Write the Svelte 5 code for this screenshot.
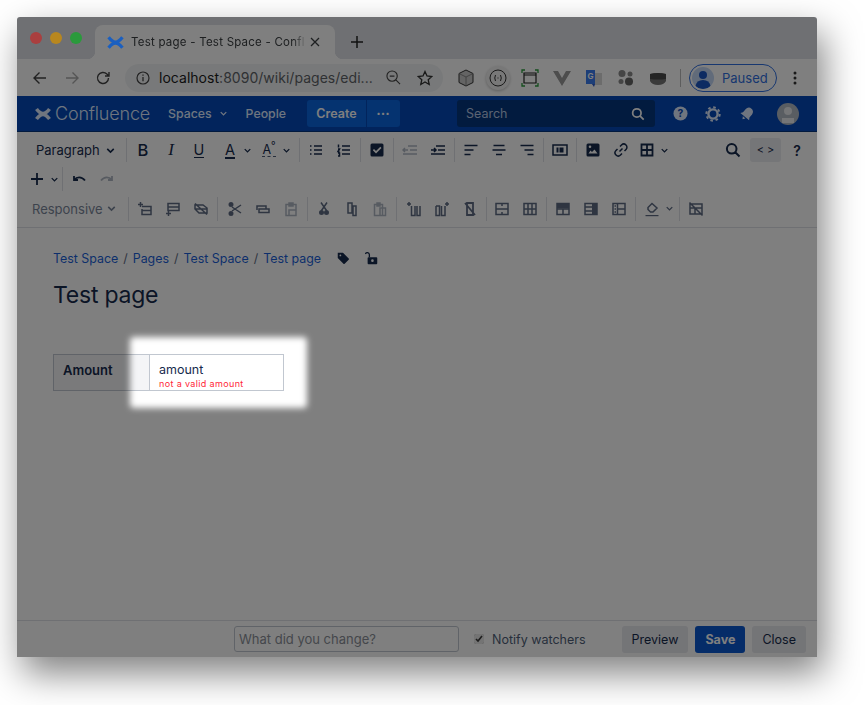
<script>
	const icons = {
		chev: { s: 'M4 6 8 10l4-4', w: 2 },
		bullets: { s: 'M6 4h8M6 8h8M6 12h8M2 4h1.5M2 8h1.5M2 12h1.5' },
		numbers: { s: 'M6 4h8M6 8h8M6 12h8M2.5 2.5v3M2 7h1.5L2 9.5h1.5M2 11h1.5v3H2' },
		check: { f: 'M3 1.5h10A1.5 1.5 0 0 1 14.5 3v10a1.5 1.5 0 0 1-1.5 1.5H3A1.5 1.5 0 0 1 1.5 13V3A1.5 1.5 0 0 1 3 1.5Zm8.3 3.2L7 9 5 7 3.8 8.2 7 11.4l5.5-5.5Z' },
		outdent: { s: 'M6 4h9M8 8h7M1 12h14M6 8H1M3 6 1 8l2 2' },
		indent: { s: 'M6 4h9M8 8h7M1 12h14M1 8h5M4 6l2 2-2 2' },
		left: { s: 'M1.5 3.5h13M1.5 8h9M1.5 12.5h6' },
		center: { s: 'M2.5 3.5h11M1.5 8h13M5 12.5h6' },
		right: { s: 'M1.5 3.5h13M5.5 8h9M8.5 12.5h6' },
		layout: { s: 'M1 3h14v10H1Z', f: 'M4.5 5.5h2v5h-2ZM7.5 5.5h4v5h-4Z' },
		image: { f: 'M3 1.5h10A1.5 1.5 0 0 1 14.5 3v10a1.5 1.5 0 0 1-1.5 1.5H3A1.5 1.5 0 0 1 1.5 13V3A1.5 1.5 0 0 1 3 1.5Zm.5 10h9L9.5 7.5 7 10 5.5 8.5Zm1.5-8a1.3 1.3 0 1 0 0 2.6 1.3 1.3 0 0 0 0-2.6Z' },
		link: { s: 'M6.5 9.5 9.5 6.5M7 4.5l1.5-1.5a3 3 0 0 1 4.5 4.5L11.5 9M9 11.5 7.5 13A3 3 0 0 1 3 8.5L4.5 7' },
		table: { s: 'M2.5 2.5h11v11h-11ZM8 2.5v11M2.5 8h11', w: 1.8 },
		search: { s: 'M10.5 10.5 14.5 14.5M11.5 6.8a4.8 4.8 0 1 1-9.6 0 4.8 4.8 0 0 1 9.6 0Z', w: 2 },
		plus: { s: 'M8 2v12M2 8h12', w: 1.8 },
		undo: { s: 'M3 5v4h4M3.3 8.8C5.5 5.8 10.5 5 14 9.5', w: 1.8 },
		redo: { s: 'M13 5v4H9M12.7 8.8C10.5 5.8 5.5 5 2 9.5', w: 1.8 },
		rowAbove: { s: 'M5 5.5h9v8H5v-1M5 9.5h9M3.5 1v5M1 3.5h5M5 8v5' },
		rowBelow: { s: 'M3 2.5h11v7H3ZM3 6h11M3.5 10v5M1 12.5h5' },
		rowDel: { s: 'M2 4h8l4 3v5H6L2 8ZM2 8h12M2 2.5 14 13.5' },
		cut: { s: 'M5 6l9 6M5 10l9-6', f: 'M1.5 3.5a2.5 2.5 0 1 1 5 0 2.5 2.5 0 0 1-5 0ZM1.5 12.5a2.5 2.5 0 1 1 5 0 2.5 2.5 0 0 1-5 0Z' },
		merge: { s: 'M2 9V5h9v3M4 8h10v3.5H4Z' },
		paste: { s: 'M3 3.5h10v11H3ZM6 2h4v3H6ZM6 9h7v5.5H6Z' },
		cutv: { s: 'M5 1.5l5.5 8M11 1.5l-5.5 8', f: 'M3 11.5a2.5 2.5 0 1 1 5 0 2.5 2.5 0 0 1-5 0ZM8 11.5a2.5 2.5 0 1 1 5 0 2.5 2.5 0 0 1-5 0Z' },
		copy: { s: 'M4 2h4v10H4ZM9 5h3v9.5H9Z' },
		pastev: { s: 'M2.5 3.5h8v11h-8ZM5 2h3v3H5ZM8 7h5.5v7.5H8Z' },
		colBefore: { s: 'M5.5 5v9.5H9V5M11 5v9.5h3V5M3 1v4M1 3h4' },
		colAfter: { s: 'M2 5v9.5h3.5V5H2M7.5 5v9.5H11V5M13 1v4M11 3h4' },
		colDel: { s: 'M5 2v12h6V2ZM3 2l10 12', w: 1.8 },
		cellMerge: { s: 'M2 2.5h12v11H2ZM2 8h12M8 2.5V5M8 11v2.5' },
		cellSplit: { s: 'M2 2.5h12v11H2ZM2 8h12M6 2.5v11M10 2.5v11' },
		headRow: { f: 'M2 2.5h12v5H2Z', s: 'M2 2.5h12v11H2ZM2 8h12M8 8v5.5' },
		headCol: { f: 'M9 2.5h5v11H9Z', s: 'M2 2.5h12v11H2ZM2 6h7M2 10h7' },
		headNum: { s: 'M2 2.5h12v11H2ZM6.5 2.5v11M6.5 8H14M3.5 5H5M3.5 8H5M3.5 11H5' },
		fill: { s: 'M4 6.5 8 2.5l5 4.5-4 4H6.5L4 8.5Z', f: 'M1.5 14h13v1.2h-13Z' },
		tableDel: { s: 'M2 3h12v10H2ZM2 7h12M7 7v6M1.5 1.5l13 13' },
		tag: { f: 'M2 2h6l6.5 6.5a1 1 0 0 1 0 1.4l-4.6 4.6a1 1 0 0 1-1.4 0L2 8Zm3 2a1 1 0 1 0 0 2 1 1 0 0 0 0-2Z' },
		lock: { s: 'M5 7V4a2.4 2.4 0 0 0-4.6-.6', f: 'M4 7h9a1 1 0 0 1 1 1v6a1 1 0 0 1-1 1H4a1 1 0 0 1-1-1V8a1 1 0 0 1 1-1Zm4.5 2.5a1.5 1.5 0 1 0 0 3 1.5 1.5 0 0 0 0-3Z' }
	};

	const rowOne = [
		[['bullets', 0], ['numbers', 0]],
		[['check', 0]],
		[['outdent', 2], ['indent', 0]],
		[['left', 0], ['center', 0], ['right', 0]],
		[['layout', 0]]
	];
	const rowThree = [
		[['rowAbove', 1], ['rowBelow', 1], ['rowDel', 1]],
		[['cut', 1], ['merge', 1], ['paste', 2]],
		[['cutv', 1], ['copy', 1], ['pastev', 2]],
		[['colBefore', 1], ['colAfter', 1], ['colDel', 1]],
		[['cellMerge', 1], ['cellSplit', 1]],
		[['headRow', 1], ['headCol', 1], ['headNum', 1]]
	];
</script>

{#snippet icon(name, size = 16)}
	<svg class="ic" width={size} height={size} viewBox="0 0 16 16" fill="none">
		{#if icons[name].f}<path d={icons[name].f} fill="currentColor" fill-rule="evenodd" />{/if}
		{#if icons[name].s}<path d={icons[name].s} stroke="currentColor" stroke-width={icons[name].w ?? 1.5} />{/if}
	</svg>
{/snippet}

{#snippet logo(size, weight)}
	<svg width={size} height={size} viewBox="0 0 16 16" fill="none">
		<path d="M1.5 3C6 9 10 9 14.5 3M1.5 13C6 7 10 7 14.5 13" stroke="currentColor" stroke-width={weight} />
	</svg>
{/snippet}

<div class="page">
	<div class="window">
		<div class="tabstrip">
			<div class="lights">
				<span class="light red"></span>
				<span class="light yellow"></span>
				<span class="light green"></span>
			</div>
			<div class="tab">
				<span class="favicon">{@render logo(17, 3)}</span>
				<span class="tab-title">Test page - Test Space - Confl</span>
				<svg class="tab-x" width="10" height="10" viewBox="0 0 10 10"><path d="M1 1l8 8M9 1 1 9" stroke="currentColor" stroke-width="1.3" /></svg>
			</div>
			<svg class="newtab" width="14" height="14" viewBox="0 0 14 14"><path d="M7 1v12M1 7h12" stroke="currentColor" stroke-width="1.5" /></svg>
		</div>

		<div class="chrome">
			<svg class="nav-ic" width="16" height="16" viewBox="0 0 16 16" fill="none"><path d="M14 8H2M7.5 2.5 2 8l5.5 5.5" stroke="currentColor" stroke-width="1.4" /></svg>
			<svg class="nav-ic off" width="16" height="16" viewBox="0 0 16 16" fill="none"><path d="M2 8h12M8.5 2.5 14 8l-5.5 5.5" stroke="currentColor" stroke-width="1.4" /></svg>
			<svg class="nav-ic" width="16" height="16" viewBox="0 0 16 16" fill="none"><path d="M13.5 8a5.5 5.5 0 1 1-1.6-3.9L14 6M14 2v4h-4" stroke="currentColor" stroke-width="1.4" /></svg>
			<div class="omnibox">
				<svg width="14" height="14" viewBox="0 0 14 14" fill="none"><circle cx="7" cy="7" r="6" stroke="currentColor" stroke-width="1.2" /><path d="M7 6v4.2M7 3.5v1.3" stroke="currentColor" stroke-width="1.3" /></svg>
				<span class="url"><b>localhost</b>:8090/wiki/pages/edi...</span>
				<svg class="om-zoom" width="15" height="15" viewBox="0 0 16 16" fill="none"><path d="M10.5 10.5 15 15M12 6.5a5.5 5.5 0 1 1-11 0 5.5 5.5 0 0 1 11 0ZM4 6.5h5" stroke="currentColor" stroke-width="1.2" /></svg>
				<svg class="om-star" width="16" height="16" viewBox="0 0 16 16" fill="none"><path d="M8 1.5 10 6l4.8.5-3.6 3.2 1 4.8L8 12l-4.2 2.5 1-4.8L1.2 6.5 6 6Z" stroke="currentColor" stroke-width="1.3" /></svg>
			</div>
			<div class="exts">
				<svg width="18" height="18" viewBox="0 0 18 18"><path d="M9 1l7 3.5v9L9 17l-7-3.5v-9Z" fill="#c8c8c8" stroke="#333" stroke-width="1" /><path d="M2 4.5 9 8l7-3.5M9 8v9" fill="none" stroke="#777" stroke-width=".8" /></svg>
				<span class="ext-round">
					<svg width="18" height="18" viewBox="0 0 18 18" fill="none"><circle cx="9" cy="9" r="8" stroke="#333" stroke-width="1" /><path d="M6.5 6Q5 9 6.5 12M11.5 6Q13 9 11.5 12M8.5 9h1" stroke="#333" stroke-width="1" /></svg>
				</span>
				<svg width="18" height="18" viewBox="0 0 18 18" fill="none"><path d="M3 4h12v10H3ZM3 6h12" stroke="#222" stroke-width="1.2" /><path d="M1 4V1h3M14 1h3v3M1 14v3h3M14 17h3v-3" stroke="#2a9d3c" stroke-width="1.3" /></svg>
				<svg width="18" height="18" viewBox="0 0 18 18"><path d="M0 2h5l4 7 4-7h5L9 17Z" fill="#9a9a9a" /></svg>
				<svg width="18" height="18" viewBox="0 0 18 18"><path d="M7 4h10v12H7Z" fill="#d8d8d8" /><path d="M1 1h9v14H1Z" fill="#3b7df0" /><path d="M10 15H7l2 3Z" fill="#2a56c6" /><text x="5.5" y="10" text-anchor="middle" class="gt">G</text></svg>
				<svg width="18" height="18" viewBox="0 0 18 18"><circle cx="5" cy="4.5" r="3.5" fill="#8a8a8a" /><circle cx="13" cy="5" r="2.5" fill="#8a8a8a" /><circle cx="4" cy="12.5" r="2.5" fill="#8a8a8a" /><circle cx="12" cy="12.5" r="4" fill="#666" /></svg>
				<svg width="18" height="18" viewBox="0 0 18 18"><path d="M1 5q8-2 16 0v7q-2 4-8 4t-8-4Z" fill="#777" /><path d="M1 5q8-2 16 0v5q-8 1-16 0Z" fill="#4a4a4a" /></svg>
			</div>
			<span class="chrome-sep"></span>
			<div class="paused">
				<span class="paused-av">
					<svg width="22" height="22" viewBox="0 0 22 22"><circle cx="11" cy="8" r="4" fill="#1a56c4" /><path d="M3.5 19q1-6 7.5-6t7.5 6q-3 3-7.5 3t-7.5-3Z" fill="#1a56c4" /></svg>
				</span>
				<span>Paused</span>
			</div>
			<svg class="kebab" width="4" height="14" viewBox="0 0 4 14"><circle cx="2" cy="2" r="1.5" /><circle cx="2" cy="7" r="1.5" /><circle cx="2" cy="12" r="1.5" /></svg>
		</div>

		<header class="nav">
			<span class="nav-logo">{@render logo(16, 3.6)}</span>
			<span class="brand">Confluence</span>
			<span class="nav-link spaces">Spaces {@render icon('chev', 11)}</span>
			<span class="nav-link people">People</span>
			<div class="create">
				<span class="create-main">Create</span>
				<span class="create-more">•••</span>
			</div>
			<div class="nav-search">
				<span>Search</span>
				{@render icon('search', 14)}
			</div>
			<div class="nav-right">
				<svg width="15" height="15" viewBox="0 0 16 16"><circle cx="8" cy="8" r="7.5" fill="#deebff" /><text x="8" y="12" text-anchor="middle" class="help-q">?</text></svg>
				<svg width="16" height="16" viewBox="0 0 16 16" fill="none"><circle cx="8" cy="8" r="4.6" stroke="#deebff" stroke-width="2.4" /><circle cx="8" cy="8" r="6.7" stroke="#deebff" stroke-width="2" stroke-dasharray="2.6 2.66" /></svg>
				<svg width="16" height="16" viewBox="0 0 16 16" fill="#deebff"><g transform="rotate(40 8 8)"><path d="M8 1c-3.2 0-4.2 2.6-4.2 5.2v3L2.3 11.5h11.400l-1.500-2.300v-3C12.200 3.600 11.200 1 8 1Z" /><path d="M6.300 12.500h3.400L8 15Z" /></g></svg>
				<span class="nav-avatar">
					<svg width="22" height="22" viewBox="0 0 22 22"><circle cx="11" cy="8" r="4" fill="#fff" opacity=".7" /><path d="M5 15h12v5H5Z" fill="#fff" opacity=".7" /></svg>
				</span>
			</div>
		</header>

		<div class="tools">
			<div class="tool-row first">
				<div class="select"><span>Paragraph</span>{@render icon('chev', 13)}</div>
				<span class="sep"></span>
				<span class="tb"><span class="g-b">B</span></span>
				<span class="tb"><span class="g-i">I</span></span>
				<span class="tb"><span class="g-u">U</span></span>
				<span class="tb mark"><span class="g-a">A</span></span>
				<span class="cv">{@render icon('chev', 11)}</span>
				<span class="tb"><span class="g-a2">A<sup>°</sup></span></span>
				<span class="cv">{@render icon('chev', 11)}</span>
				{#each rowOne as group}
					<span class="sep wide"></span>
					{#each group as [name, level]}
						<span class="tb" class:dis2={level === 2}>{@render icon(name)}</span>
					{/each}
				{/each}
				<span class="sep wide"></span>
				<span class="tb">{@render icon('image')}</span>
				<span class="tb">{@render icon('link')}</span>
				<span class="tb table-tb">{@render icon('table')}</span>
				<span class="cv">{@render icon('chev', 11)}</span>
				<span class="spacer"></span>
				<span class="tb">{@render icon('search')}</span>
				<span class="code">&lt; &gt;</span>
				<span class="tb help">?</span>
			</div>
			<div class="tool-row second">
				<span class="tb">{@render icon('plus')}</span>
				<span class="cv">{@render icon('chev', 11)}</span>
				<span class="sep"></span>
				<span class="tb">{@render icon('undo')}</span>
				<span class="tb dis2">{@render icon('redo')}</span>
			</div>
			<div class="tool-row third">
				<div class="select resp"><span>Responsive</span>{@render icon('chev', 13)}</div>
				{#each rowThree as group, i}
					<span class="sep wide" class:p1={i === 1 || i === 3} class:m1={i === 4}></span>
					{#each group as [name, level]}
						<span class="tb" class:dis={level === 1} class:dis2={level === 2}>{@render icon(name)}</span>
					{/each}
				{/each}
				<span class="sep wide"></span>
				<span class="tb dis">{@render icon('fill')}</span>
				<span class="cv dis">{@render icon('chev', 11)}</span>
				<span class="sep wide"></span>
				<span class="tb dis">{@render icon('tableDel')}</span>
			</div>
		</div>

		<main class="content">
			<nav class="crumbs">
				<a href="#a">Test Space</a><i>/</i><a href="#a">Pages</a><i>/</i><a href="#a">Test Space</a><i>/</i><a href="#a">Test page</a>
				<span class="crumb-ic">{@render icon('tag', 14)}</span>
				<span class="crumb-ic">{@render icon('lock', 14)}</span>
			</nav>
			<h1>Test page</h1>
			<table>
				<tbody>
					<tr>
						<th>Amount</th>
						<td>
							<div class="val">amount</div>
							<div class="err">not a valid amount</div>
						</td>
					</tr>
				</tbody>
			</table>
		</main>

		<footer class="save-bar">
			<input class="comment" placeholder="What did you change?" />
			<label class="notify"><input type="checkbox" checked /> Notify watchers</label>
			<button class="btn">Preview</button>
			<button class="btn primary">Save</button>
			<button class="btn">Close</button>
		</footer>

		<div class="spot"></div>
	</div>
</div>

<style>
	:global(body) {
		background: #fff;
		font-family: Inter, 'Liberation Sans', sans-serif;
	}

	.page {
		padding: 17px 48px 48px 17px;
		width: 800px;
	}

	.window {
		position: relative;
		width: 800px;
		height: 640px;
		overflow: hidden;
		border-radius: 3px 3px 0 0;
		background: #fff;
		color: #172b4d;
		display: flex;
		flex-direction: column;
		box-shadow: 6px 16px 36px rgba(0, 0, 0, 0.5);
	}

	.spot {
		position: absolute;
		left: 113px;
		top: 320px;
		width: 177px;
		height: 71px;
		border-radius: 4px;
		box-shadow: 0 0 0 1400px rgba(0, 0, 0, 0.5);
		filter: blur(3px);
	}

	/* browser chrome */
	.tabstrip {
		height: 42px;
		flex: none;
		background: #dee1e6;
		display: flex;
		align-items: flex-end;
		padding-left: 13px;
		color: #3c4043;
	}

	.lights {
		position: relative;
		z-index: 1;
		display: flex;
		gap: 8px;
		align-self: flex-start;
		margin-top: 15px;
		width: 65px;
	}

	.light {
		width: 12px;
		height: 12px;
		border-radius: 50%;
	}

	/* these keep more colour than the dimmer would leave them */
	.red { background: #aa3f3f; }
	.yellow { background: #b8871f; }
	.green { background: #2a9a3c; }

	.tab {
		position: relative;
		width: 240px;
		height: 34px;
		background: #fff;
		border-radius: 8px 8px 0 0;
		display: flex;
		align-items: center;
		padding-left: 12px;
		box-sizing: border-box;
	}

	.tab::before,
	.tab::after {
		content: '';
		position: absolute;
		bottom: 0;
		width: 8px;
		height: 8px;
	}

	.tab::before {
		left: -8px;
		background: radial-gradient(circle at 0 0, transparent 8px, #fff 8.5px);
	}

	.tab::after {
		right: -8px;
		background: radial-gradient(circle at 100% 0, transparent 8px, #fff 8.5px);
	}

	.favicon {
		position: relative;
		z-index: 1;
		display: flex;
		color: #1a5fc0;
	}

	.tab-title {
		margin-left: 7px;
		width: 176px;
		flex: none;
		white-space: nowrap;
		font-size: 11.5px;
		letter-spacing: 0.02em;
		-webkit-mask-image: linear-gradient(to right, #000 92%, transparent);
		mask-image: linear-gradient(to right, #000 92%, transparent);
	}

	.tab-x {
		margin-left: 3px;
	}

	.newtab {
		margin: 0 0 10px 15px;
		color: #222;
	}

	.chrome {
		height: 37px;
		flex: none;
		background: #fff;
		display: flex;
		align-items: center;
		color: #444;
		padding-left: 15px;
		box-sizing: border-box;
	}

	.nav-ic { margin-right: 16px; flex: none; }
	.nav-ic.off { color: #aaa; margin-right: 15px; }
	.nav-ic:nth-child(3) { margin-right: 14px; }

	.omnibox {
		width: 318px;
		height: 28px;
		flex: none;
		border-radius: 14px;
		background: #f1f3f4;
		display: flex;
		align-items: center;
		padding-left: 11px;
		box-sizing: border-box;
	}

	.url {
		margin-left: 9px;
		font-size: 14px;
		color: #5f6368;
		letter-spacing: 0.002em;
		white-space: nowrap;
		width: 227px;
	}

	.url b {
		font-weight: 400;
		color: #1c1c1c;
	}

	.om-star { margin-left: 16px; color: #333; }

	.exts {
		display: flex;
		align-items: center;
		gap: 14px;
		margin-left: 14px;
	}

	.ext-round {
		display: flex;
		padding: 3px;
		margin: 0 -3px;
		border-radius: 50%;
		background: #f1f1f1;
		box-shadow: 0 1px 3px rgba(0, 0, 0, 0.25);
	}

	.gt {
		font: 700 8px Inter, sans-serif;
		fill: #fff;
	}

	.chrome-sep {
		width: 1px;
		height: 18px;
		background: #bbb;
		margin: 0 8px 0 13px;
	}

	.paused {
		width: 88px;
		height: 28px;
		box-sizing: border-box;
		border: 1px solid #2f6fe0;
		border-radius: 14px;
		display: flex;
		align-items: center;
		gap: 8px;
		padding-left: 2px;
		font-size: 13px;
		color: #2f6fe0;
	}

	.paused-av {
		width: 22px;
		height: 22px;
		border-radius: 50%;
		overflow: hidden;
		background: #c2d6f5;
		display: flex;
	}

	.kebab {
		margin-left: 16px;
		fill: #333;
	}

	/* confluence nav */
	.nav {
		height: 36px;
		flex: none;
		background: #0548b8;
		color: #deebff;
		display: flex;
		align-items: center;
		box-sizing: border-box;
		padding-left: 18px;
		border-bottom: 1px solid #05357c;
	}

	.nav-logo { display: flex; }

	.brand {
		margin-left: 4px;
		width: 113px;
		font-size: 18px;
		font-weight: 300;
		letter-spacing: -0.01em;
	}

	.nav-link {
		font-size: 12.3px;
		font-weight: 500;
		display: flex;
		align-items: center;
		gap: 6px;
	}

	.people { margin-left: 17px; }

	.create {
		display: flex;
		margin-left: 21px;
		height: 27px;
		border-radius: 3px;
		overflow: hidden;
		background: #0a66e0;
		color: #fff;
		font-size: 12.5px;
		font-weight: 600;
	}

	.create-main {
		width: 59px;
		display: flex;
		align-items: center;
		justify-content: center;
		border-right: 1px solid #0548b8;
	}

	.create-more {
		width: 33px;
		display: flex;
		align-items: center;
		justify-content: center;
		font-size: 7px;
		letter-spacing: 1px;
	}

	.nav-search {
		margin-left: 57px;
		width: 198px;
		height: 27px;
		box-sizing: border-box;
		border-radius: 3px;
		background: #04377f;
		display: flex;
		align-items: center;
		justify-content: space-between;
		padding: 0 10px 0 9px;
		font-size: 12.5px;
		color: #b4c6e4;
	}

	.nav-search .ic { color: #fff; }

	.nav-right {
		margin-left: 18px;
		display: flex;
		align-items: center;
		gap: 17.5px;
	}

	.help-q {
		font: 700 11px Inter, sans-serif;
		fill: #0548b8;
	}

	.nav-avatar {
		width: 22px;
		height: 22px;
		margin-left: 5px;
		border-radius: 50%;
		overflow: hidden;
		background: #b3bac5;
		display: flex;
	}

	/* editor toolbar */
	.tools {
		flex: none;
		height: 96px;
		background: #fff;
		border-bottom: 1px solid #dfe1e6;
		box-sizing: border-box;
		color: #172b4d;
	}

	.tool-row {
		display: flex;
		align-items: center;
	}

	.first { height: 36px; }
	.second { height: 22px; padding-left: 6px; }
	.third { height: 37px; }

	.tb {
		width: 28px;
		height: 24px;
		flex: none;
		display: flex;
		align-items: center;
		justify-content: center;
	}

	.mark { margin-left: 3px; }

	.cv {
		width: 14px;
		margin: 0 1px 0 -4px;
		display: flex;
		justify-content: center;
		flex: none;
	}

	.table-tb { margin-left: -2px; }

	.sep {
		width: 1px;
		height: 24px;
		margin: 0 2px 0 0;
		background: #dfe1e6;
		flex: none;
	}

	.sep.wide { margin: 0 2px; }
	.sep.p1 { margin-right: 3px; }
	.sep.m1 { margin-right: 1px; }

	.first .cv + .sep { margin-left: 5px; }

	.select {
		width: 109px;
		flex: none;
		padding-left: 19px;
		box-sizing: border-box;
		display: flex;
		align-items: center;
		font-size: 13px;
	}

	.select span { width: 68px; }

	.resp {
		padding-left: 15px;
		width: 109px;
		color: #7a869a;
	}

	.resp span { width: 73px; }

	.g-b { font-size: 16.5px; font-weight: 500; }

	.g-i {
		font: italic 400 17px 'Liberation Serif', serif;
	}

	.g-u {
		font-size: 14.5px;
		line-height: 15px;
		border-bottom: 1.5px solid currentColor;
	}

	.g-a {
		font-size: 14.5px;
		line-height: 15px;
		border-bottom: 2px solid #172b4d;
	}

	.g-a2 {
		font-size: 12.5px;
		line-height: 13px;
		border-bottom: 1px dashed #505f79;
	}

	.g-a2 sup {
		font-size: 10px;
		line-height: 0;
	}

	.spacer { flex: 1; }

	.code {
		width: 31px;
		height: 24px;
		margin-left: 3px;
		border-radius: 3px;
		background: #ebecf0;
		display: flex;
		align-items: center;
		justify-content: center;
		font-size: 11px;
		flex: none;
	}

	.help {
		margin: 0 6px 0 2px;
		font-size: 14px;
		font-weight: 600;
	}

	.dis { color: #42526e; opacity: 0.85; }
	.dis2 { color: #7a869a; opacity: 0.6; }

	/* page body */
	.content {
		flex: 1;
		padding: 21px 36px 0;
		background: #fff;
	}

	.crumbs {
		display: flex;
		align-items: center;
		height: 18px;
		font-size: 12.4px;
	}

	.crumbs a {
		color: #1a5fd8;
		text-decoration: none;
	}

	.crumbs i {
		font-style: normal;
		color: #5e6c84;
		margin: 0 5px;
	}

	.crumb-ic {
		display: flex;
		margin-left: 15px;
	}

	h1 {
		margin: 13px 0 44px;
		font-size: 23px;
		line-height: 30px;
		font-weight: 400;
		letter-spacing: -0.01em;
	}

	table {
		border-collapse: collapse;
		width: 231px;
	}

	th, td {
		border: 1px solid #c1c7d0;
		padding: 0;
		height: 36px;
		vertical-align: top;
		text-align: left;
	}

	th {
		width: 96px;
		background: #f4f5f7;
		font-size: 13px;
		font-weight: 600;
		padding: 7px 0 0 9px;
		box-sizing: border-box;
	}

	td { padding: 7px 9px 0; box-sizing: border-box; }

	.val {
		font-size: 12.5px;
		line-height: 16px;
	}

	.err {
		font-size: 9px;
		line-height: 12px;
		letter-spacing: 0.04em;
		color: #ff1f38;
	}

	/* bottom bar */
	.save-bar {
		height: 37px;
		flex: none;
		background: #fff;
		border-top: 1px solid #dfe1e6;
		box-sizing: border-box;
		display: flex;
		align-items: center;
		padding: 0 9px 0 217px;
	}

	.comment {
		width: 225px;
		height: 26px;
		box-sizing: border-box;
		border: 1px solid #c1c7d0;
		border-radius: 3px;
		padding: 0 4px;
		font: 400 13px Inter, sans-serif;
		background: #fff;
	}

	.comment::placeholder { color: #8a8f98; opacity: 1; }

	.notify {
		margin: 0 36px 0 15px;
		display: flex;
		align-items: center;
		gap: 8px;
		font-size: 12.5px;
		color: #505f79;
		white-space: nowrap;
	}

	.notify input {
		width: 10px;
		height: 10px;
		margin: 0;
		accent-color: #e8e8e8;
	}

	.btn {
		height: 27px;
		padding: 0 10px;
		margin-left: 7px;
		border: 0;
		border-radius: 3px;
		background: #e9eaee;
		color: #172b4d;
		font: 400 12.5px Inter, sans-serif;
	}

	.notify + .btn { margin-left: 0; }

	.primary {
		background: #0a58d0;
		color: #fff;
		font-weight: 700;
	}
</style>
